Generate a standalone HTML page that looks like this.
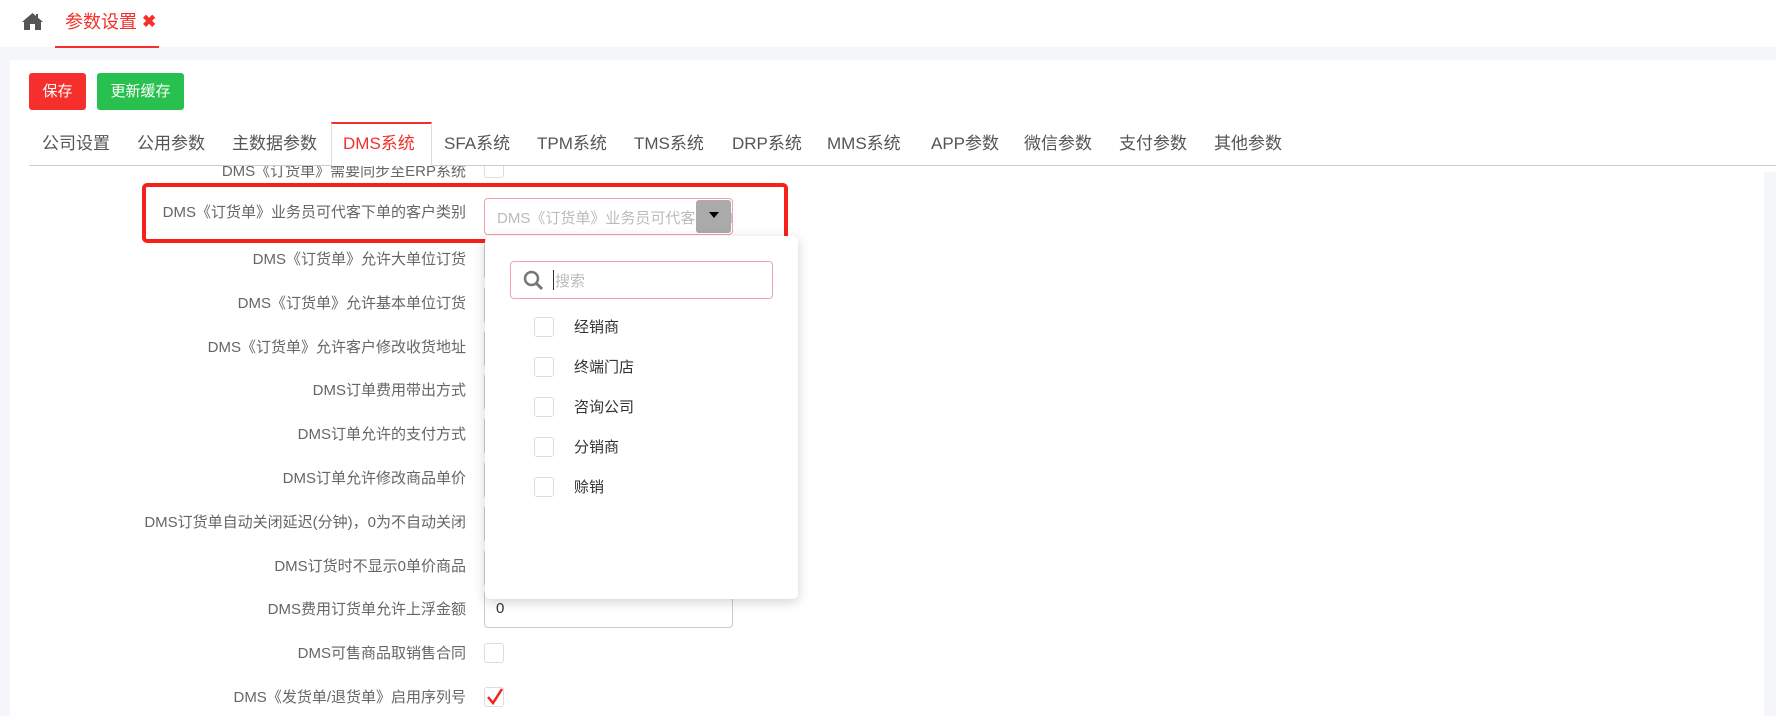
<!DOCTYPE html>
<html><head><meta charset="utf-8"><style>
*{margin:0;padding:0;box-sizing:border-box}
body{width:1776px;height:716px;overflow:hidden;background:#fff;font-family:"Liberation Sans","Noto Sans CJK SC",sans-serif;position:relative;color:#555}
.a{position:absolute;white-space:nowrap}
.lbl{position:absolute;right:1310px;font-size:15px;color:#666;line-height:20px}
.tab{position:absolute;top:133px;font-size:17px;color:#555;line-height:22px}
.cb{position:absolute;width:20px;height:20px;border:1px solid #ddd;border-radius:3px;background:#fff}
.inp{position:absolute;left:484px;width:249px;height:38px;border:1px solid #ccc;border-radius:4px;background:#fff}
.it{position:absolute;left:574px;font-size:15px;color:#333;line-height:20px}
</style></head><body>
<div class="a" style="left:0;top:47px;width:1776px;height:13px;background:#f5f6fa"></div>
<div class="a" style="left:0;top:60px;width:10px;height:656px;background:#f5f6fa"></div>
<svg class="a" style="left:22px;top:13px" width="21" height="17" viewBox="0 0 21 17"><path d="M10.5 0 L0 9 L2 9 L2 17 L8 17 L8 11 L13 11 L13 17 L19 17 L19 9 L21 9 L16 4.7 L16 1 L14 1 L14 3 Z" fill="#555"/></svg>
<div class="a" style="left:65px;top:10px;font-size:18px;color:#f5302c;line-height:24px">参数设置</div>
<div class="a" style="left:142px;top:10px;font-size:17px;color:#f5302c;font-weight:bold;line-height:24px">✖</div>
<div class="a" style="left:55px;top:46px;width:104px;height:2px;background:#f5302c"></div>
<div class="a" style="left:29px;top:73px;width:57px;height:37px;background:#f5302c;border-radius:3px;color:#fff;font-size:15px;line-height:37px;text-align:center">保存</div>
<div class="a" style="left:97px;top:73px;width:87px;height:37px;background:#28c04e;border-radius:3px;color:#fff;font-size:15px;line-height:37px;text-align:center">更新缓存</div>
<div class="a" style="left:29px;top:165px;width:1747px;height:1px;background:#ccc"></div>
<div class="a" style="left:331px;top:122px;width:101px;height:44px;background:#fff;border:1px solid #ddd;border-bottom:none;border-top:2px solid #f5302c"></div>
<div class="tab" style="left:42px">公司设置</div>
<div class="tab" style="left:137px">公用参数</div>
<div class="tab" style="left:232px">主数据参数</div>
<div class="tab" style="left:343px;color:#f5302c">DMS系统</div>
<div class="tab" style="left:444px">SFA系统</div>
<div class="tab" style="left:537px">TPM系统</div>
<div class="tab" style="left:634px">TMS系统</div>
<div class="tab" style="left:732px">DRP系统</div>
<div class="tab" style="left:827px">MMS系统</div>
<div class="tab" style="left:931px">APP参数</div>
<div class="tab" style="left:1024px">微信参数</div>
<div class="tab" style="left:1119px">支付参数</div>
<div class="tab" style="left:1214px">其他参数</div>
<div class="a" style="left:1764px;top:172px;width:12px;height:544px;background:#f5f6fa"></div>
<div style="position:absolute;left:0;top:166px;width:1776px;height:14px;overflow:hidden">
<div class="lbl" style="top:-4px">DMS《订货单》需要同步至ERP系统</div>
<div class="cb" style="left:484px;top:-8px"></div></div>
<div class="lbl" style="top:203px">DMS《订货单》业务员可代客下单的客户类别</div>
<div class="a" style="left:484px;top:198px;width:249px;height:37px;border:1px solid #f3a0a8;border-radius:4px;overflow:hidden;background:#fff">
<div class="a" style="left:12px;top:8px;font-size:15px;color:#bbb">DMS《订货单》业务员可代客下单的客户类别</div>
<div class="a" style="left:211px;top:1px;width:35px;height:33px;background:#aaa;border-radius:3px"><div class="a" style="left:13px;top:12px;border:5px solid transparent;border-top:6px solid #000"></div></div></div>
<div class="a" style="left:142px;top:183px;width:646px;height:60px;border:4px solid #f5221b;border-radius:5px"></div>
<div class="lbl" style="top:250px">DMS《订货单》允许大单位订货</div>
<div class="lbl" style="top:294px">DMS《订货单》允许基本单位订货</div>
<div class="lbl" style="top:338px">DMS《订货单》允许客户修改收货地址</div>
<div class="lbl" style="top:381px">DMS订单费用带出方式</div>
<div class="lbl" style="top:425px">DMS订单允许的支付方式</div>
<div class="lbl" style="top:469px">DMS订单允许修改商品单价</div>
<div class="lbl" style="top:513px">DMS订货单自动关闭延迟(分钟)，0为不自动关闭</div>
<div class="lbl" style="top:557px">DMS订货时不显示0单价商品</div>
<div class="lbl" style="top:600px">DMS费用订货单允许上浮金额</div>
<div class="lbl" style="top:644px">DMS可售商品取销售合同</div>
<div class="lbl" style="top:688px">DMS《发货单/退货单》启用序列号</div>
<div class="inp" style="top:242px"></div><div class="inp" style="top:286px"></div><div class="inp" style="top:330px"></div><div class="inp" style="top:373px"></div><div class="inp" style="top:417px"></div><div class="inp" style="top:461px"></div><div class="inp" style="top:505px"></div><div class="inp" style="top:549px"></div>
<div class="inp" style="top:590px"><div class="a" style="left:11px;top:9px;font-size:15px;color:#333">0</div></div>
<div class="cb" style="left:484px;top:643px"></div>
<div class="cb" style="left:484px;top:687px"><svg class="a" style="left:1px;top:0" width="18" height="18" viewBox="0 0 18 18"><path d="M2 9 L7 15 L16 1" stroke="#f5221b" stroke-width="2.5" fill="none"/></svg></div>
<div class="a" style="left:485px;top:236px;width:313px;height:363px;background:#fff;border-radius:5px;box-shadow:0 3px 12px rgba(0,0,0,.18)"></div>
<div class="a" style="left:510px;top:261px;width:263px;height:38px;border:1px solid #f3a0a8;border-radius:4px;background:#fff">
<svg class="a" style="left:12px;top:8px" width="21" height="21" viewBox="0 0 21 21"><circle cx="8.5" cy="8.5" r="6.5" stroke="#777" stroke-width="2.5" fill="none"/><path d="M13 13 L19 19" stroke="#777" stroke-width="3"/></svg>
<div class="a" style="left:42px;top:8px;width:1px;height:20px;background:#333"></div>
<div class="a" style="left:44px;top:8px;font-size:15px;color:#bbb">搜索</div></div>
<div class="cb" style="left:534px;top:317px"></div><div class="it" style="top:318px">经销商</div>
<div class="cb" style="left:534px;top:357px"></div><div class="it" style="top:358px">终端门店</div>
<div class="cb" style="left:534px;top:397px"></div><div class="it" style="top:398px">咨询公司</div>
<div class="cb" style="left:534px;top:437px"></div><div class="it" style="top:438px">分销商</div>
<div class="cb" style="left:534px;top:477px"></div><div class="it" style="top:478px">赊销</div>
</body></html>
